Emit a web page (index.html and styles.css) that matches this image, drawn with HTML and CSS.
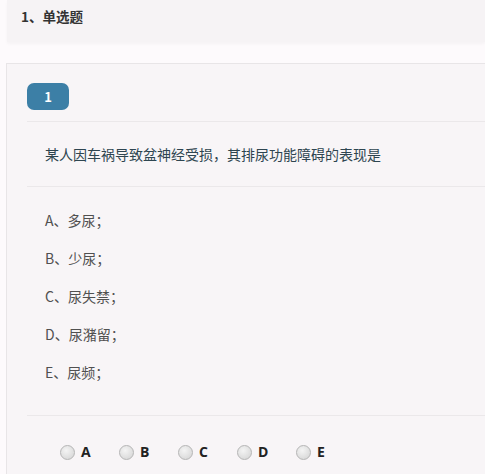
FILE: index.html
```html
<!DOCTYPE html>
<html lang="zh-CN">
<head>
  <meta charset="UTF-8">
  <meta name="viewport" content="width=device-width, initial-scale=1.0">
  <title>单选题</title>
  <link rel="stylesheet" href="styles.css">
</head>
<body>
  <!-- Section title -->
  <div class="section-head">1、单选题</div>

  <!-- Question card -->
  <div class="card">
    <div class="badge">1</div>
    <div class="question">某人因车祸导致盆神经受损，其排尿功能障碍的表现是</div>
    <ul class="options">
      <li>A、多尿；</li>
      <li>B、少尿；</li>
      <li>C、尿失禁；</li>
      <li>D、尿潴留；</li>
      <li>E、尿频；</li>
    </ul>
    <div class="answers">
      <label class="choice"><span class="radio"></span>A</label>
      <label class="choice"><span class="radio"></span>B</label>
      <label class="choice"><span class="radio"></span>C</label>
      <label class="choice"><span class="radio"></span>D</label>
      <label class="choice"><span class="radio"></span>E</label>
    </div>
  </div>
</body>
</html>
```

FILE: styles.css
```css
body { margin: 0; background: #fdfafc; font-family: "Noto Sans CJK SC", "Noto Sans", sans-serif; font-size: 14px; color: #444; overflow: hidden; }
.section-head { margin-left: 7px; height: 42px; padding-left: 14px; line-height: 32px; background: #f6f3f5; color: #333; font-weight: bold; font-size: 13.5px; box-shadow: 0 2px 3px rgba(0,0,0,0.03); }
.card { margin: 21px 0 0 6px; border: 1px solid #e8e5e7; border-right: none; border-bottom: none; background: #f8f5f7; padding: 19px 0 0 20px; height: 391px; }
.badge { width: 42px; height: 27px; line-height: 27px; text-align: center; background: #3c7fa6; color: #fff; font-weight: bold; font-size: 13px; border-radius: 7px; }
.question { margin-top: 11px; border-top: 1px solid #ebe8ea; border-bottom: 1px solid #ebe8ea; line-height: 64px; padding-left: 18px; color: #2e4550; }
.options { list-style: none; margin: 0; padding: 14px 0 24px 18px; border-bottom: 1px solid #ebe8ea; }
.options li { line-height: 38px; color: #505050; }
.answers { display: flex; padding: 28px 0 0 33px; }
.choice { display: flex; align-items: center; width: 59px; font-family: "Open Sans", "Noto Sans", sans-serif; font-weight: bold; font-size: 14px; color: #222; line-height: 16px; }
.radio { width: 13px; height: 13px; border: 1px solid #b5b5b5; border-radius: 50%; margin-right: 6px; background: radial-gradient(circle at 40% 35%, #f4f4f4, #d2d2d2); }
```
